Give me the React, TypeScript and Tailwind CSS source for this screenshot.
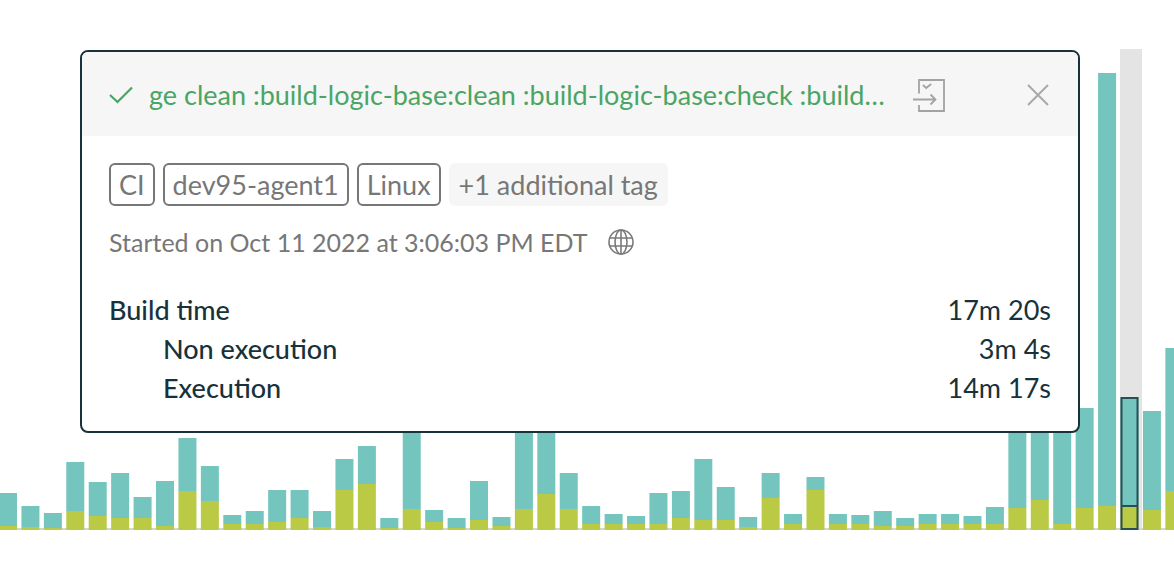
import React from "react";

// [total height, execution height] per build, oldest first
const builds = [
  [37, 4], [24, 3], [17, 2], [68, 19], [48, 14], [57, 12], [33, 12], [49, 4],
  [92, 39], [64, 29], [15, 6], [19, 6], [40, 8], [40, 12], [19, 3], [71, 40],
  [84, 46], [12, 2], [110, 21], [20, 8], [12, 2], [49, 10], [13, 4], [120, 21],
  [130, 36], [57, 21], [24, 6], [16, 6], [14, 6], [37, 6], [39, 12], [71, 10],
  [43, 10], [13, 3], [57, 32], [16, 6], [53, 40], [16, 6], [15, 6], [19, 4],
  [12, 4], [16, 6], [16, 6], [14, 6], [23, 6], [120, 22], [130, 30], [125, 6],
  [122, 22], [457, 24], [133, 25], [119, 20], [182, 39],
];

const selected = 50;
const baseline = 530;
const step = 22.43;
const barWidth = 18;

const tags = ["CI", "dev95-agent1", "Linux"];

const timings = [
  { label: "Build time", value: "17m 20s", nested: false },
  { label: "Non execution", value: "3m 4s", nested: true },
  { label: "Execution", value: "14m 17s", nested: true },
];

function BuildChart() {
  return (
    <svg viewBox="0 0 1174 562" className="block w-full" role="img" aria-label="Build times">
      <rect x="1120" y="49" width="22" height="481" fill="#e4e4e4" />
      <rect x="0" y="528" width="1174" height="2" fill="#d5d5d5" />
      {builds.map(([total, execution], i) => {
        const x = i * step - 1;
        return (
          <g key={i}>
            <rect x={x} y={baseline - total} width={barWidth} height={total - execution} fill="#73c5be" />
            <rect x={x} y={baseline - execution} width={barWidth} height={execution} fill="#bbca44" />
            {i === selected && (
              <g fill="none" stroke="#284f55" strokeWidth="2">
                <rect x={x + 1} y={baseline - total + 1} width={barWidth - 2} height={total - 2} />
                <path d={`M${x + 1} ${baseline - execution + 1}h${barWidth - 2}`} />
              </g>
            )}
          </g>
        );
      })}
    </svg>
  );
}

function CheckIcon() {
  return (
    <svg viewBox="0 0 24 18" className="h-[18px] w-6 shrink-0" fill="none" stroke="#4aa564" strokeWidth="2.200">
      <path d="M1 9l7.500 7L23 1.500" />
    </svg>
  );
}

function OpenBuildIcon() {
  return (
    <svg viewBox="0 0 32 34" className="h-[34px] w-8" fill="none" stroke="#a3a3a3" strokeWidth="1.800">
      <path d="M6 15.500V2h25v31H6v-6" />
      <path d="M0 21.500h22M17.500 16.500l5 5-5 5" />
      <path d="M10 7l3.200 3 5-4" />
    </svg>
  );
}

function CloseIcon() {
  return (
    <svg viewBox="0 0 22 22" className="size-[22px]" fill="none" stroke="#a9a9a9" strokeWidth="2">
      <path d="M1 1l20 20M21 1L1 21" />
    </svg>
  );
}

function GlobeIcon() {
  return (
    <svg viewBox="0 0 26 26" className="size-[26px]" fill="none" stroke="#7a7a7a" strokeWidth="1.600">
      <circle cx="13" cy="13" r="12" />
      <ellipse cx="13" cy="13" rx="6" ry="12" />
      <path d="M13 1v24M2 9h22M2 17h22" />
    </svg>
  );
}

export default function App() {
  return (
    <main className="relative min-h-screen overflow-hidden bg-white font-['Lato',sans-serif] text-[27px] leading-8 text-[#777777]">
      <BuildChart />
      <section className="absolute top-[50px] right-[94px] left-20 overflow-hidden rounded-lg border-2 border-[#17323a] bg-white">
        <header className="flex h-[84px] items-center bg-[#f6f6f6] pt-0.5 pr-[29px] pl-[27px]">
          <CheckIcon />
          <a href="#" className="ml-4 whitespace-nowrap text-[#4aa564]">
            ge clean :build-logic-base:clean :build-logic-base:check :build…
          </a>
          <div className="ml-7 flex grow items-center justify-between">
            <button type="button" aria-label="Open build">
              <OpenBuildIcon />
            </button>
            <button type="button" aria-label="Close">
              <CloseIcon />
            </button>
          </div>
        </header>
        <div className="px-[27px] pt-[27px] pb-6">
          <div className="flex gap-2">
            {tags.map((tag) => (
              <span key={tag} className="flex h-[43px] items-center rounded-md border-2 border-[#777777] px-2">
                {tag}
              </span>
            ))}
            <button type="button" className="h-[43px] rounded-md bg-[#f6f6f6] px-[10px]">
              +1 additional tag
            </button>
          </div>
          <div className="mt-5 flex items-center gap-5 text-[25px]">
            <span>Started on Oct 11 2022 at 3:06:03 PM EDT</span>
            <button type="button" aria-label="Change time zone">
              <GlobeIcon />
            </button>
          </div>
          <dl className="mt-8 text-[#17323a]">
            {timings.map((t) => (
              <div key={t.label} className="flex h-[39px] items-center justify-between">
                <dt className={t.nested ? "pl-[54px] font-medium" : "font-medium"}>{t.label}</dt>
                <dd>{t.value}</dd>
              </div>
            ))}
          </dl>
        </div>
      </section>
    </main>
  );
}
